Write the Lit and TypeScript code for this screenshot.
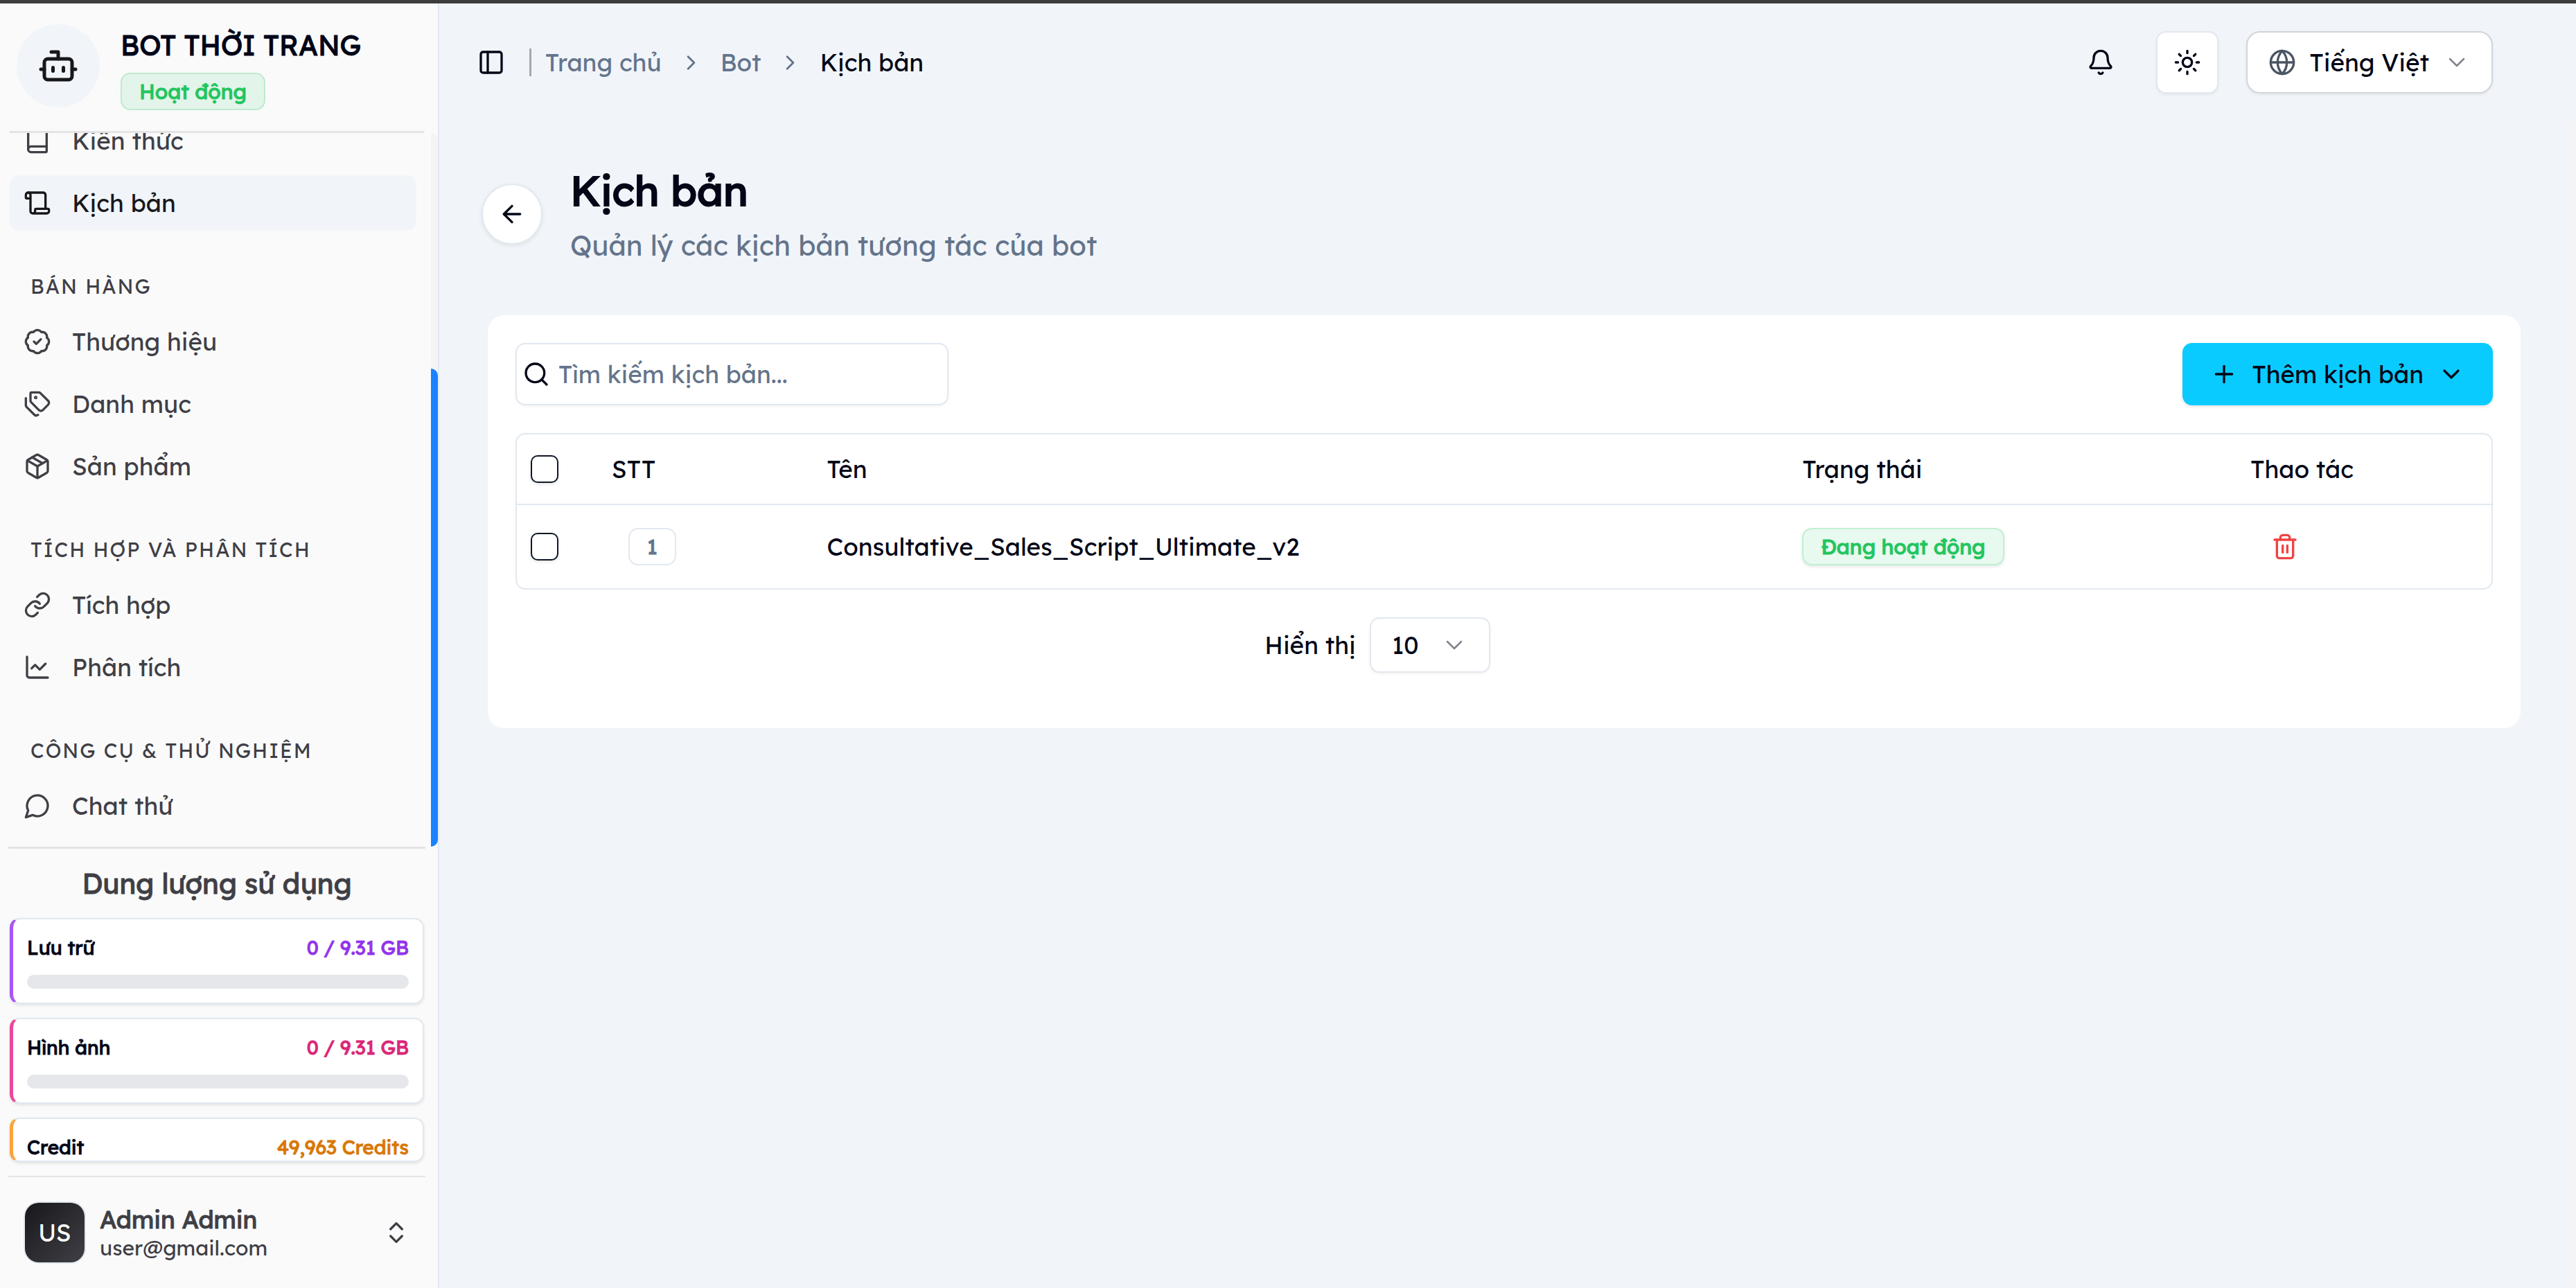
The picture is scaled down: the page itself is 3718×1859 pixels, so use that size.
import { LitElement, html, css, svg, type TemplateResult } from "lit";
import { customElement, property, state } from "lit/decorators.js";
import { classMap } from "lit/directives/class-map.js";

const ICONS: Record<string, TemplateResult> = {
  bot: svg`<path d="M12 8V4H8"/><rect width="16" height="12" x="4" y="8" rx="2"/><path d="M2 14h2"/><path d="M20 14h2"/><path d="M15 13v2"/><path d="M9 13v2"/>`,
  book: svg`<path d="M4 19.5v-15A2.500 2.500 0 0 1 6.500 2H19a1 1 0 0 1 1 1v18a1 1 0 0 1-1 1H6.500a1 1 0 0 1 0-5H20"/>`,
  scroll: svg`<path d="M19 17V5a2 2 0 0 0-2-2H4"/><path d="M8 21h12a2 2 0 0 0 2-2v-1a1 1 0 0 0-1-1H11a1 1 0 0 0-1 1v1a2 2 0 1 1-4 0V5a2 2 0 1 0-4 0v2a1 1 0 0 0 1 1h3"/>`,
  badge: svg`<path d="M3.850 8.620a4 4 0 0 1 4.780-4.770 4 4 0 0 1 6.740 0 4 4 0 0 1 4.780 4.780 4 4 0 0 1 0 6.740 4 4 0 0 1-4.770 4.780 4 4 0 0 1-6.750 0 4 4 0 0 1-4.780-4.770 4 4 0 0 1 0-6.760Z"/><path d="m9 12 2 2 4-4"/>`,
  tags: svg`<path d="M13.172 2a2 2 0 0 1 1.414.586l6.710 6.710a2.400 2.400 0 0 1 0 3.408l-4.592 4.592a2.400 2.400 0 0 1-3.408 0l-6.710-6.710A2 2 0 0 1 6 9.172V3a1 1 0 0 1 1-1z"/><path d="M2 7v6.172a2 2 0 0 0 .586 1.414l6.710 6.710a2.400 2.400 0 0 0 3.191.193"/><circle cx="10.500" cy="6.500" r=".5" fill="currentColor"/>`,
  pack: svg`<path d="M11 21.730a2 2 0 0 0 2 0l7-4A2 2 0 0 0 21 16V8a2 2 0 0 0-1-1.730l-7-4a2 2 0 0 0-2 0l-7 4A2 2 0 0 0 3 8v8a2 2 0 0 0 1 1.730z"/><path d="M12 22V12"/><path d="M3.290 7 12 12l8.710-5"/><path d="m7.500 4.270 9 5.150"/>`,
  link: svg`<path d="M10 13a5 5 0 0 0 7.540.540l3-3a5 5 0 0 0-7.070-7.070l-1.720 1.710"/><path d="M14 11a5 5 0 0 0-7.540-.540l-3 3a5 5 0 0 0 7.070 7.070l1.710-1.710"/>`,
  chart: svg`<path d="M3 3v16a2 2 0 0 0 2 2h16"/><path d="m19 9-5 5-4-4-3 3"/>`,
  chat: svg`<path d="M7.900 20A9 9 0 1 0 4 16.100L2 22Z"/>`,
  updown: svg`<path d="m7 15 5 5 5-5"/><path d="m7 9 5-5 5 5"/>`,
  panel: svg`<rect width="18" height="18" x="3" y="3" rx="2"/><path d="M9 3v18"/>`,
  right: svg`<path d="m9 18 6-6-6-6"/>`,
  down: svg`<path d="m6 9 6 6 6-6"/>`,
  back: svg`<path d="m12 19-7-7 7-7"/><path d="M19 12H5"/>`,
  bell: svg`<path d="M10.268 21a2 2 0 0 0 3.464 0"/><path d="M3.262 15.326A1 1 0 0 0 4 17h16a1 1 0 0 0 .740-1.673C19.410 13.956 18 12.499 18 8A6 6 0 0 0 6 8c0 4.499-1.411 5.956-2.738 7.326"/>`,
  sun: svg`<circle cx="12" cy="12" r="4"/><path d="M12 2v2M12 20v2M4.930 4.930l1.410 1.410M17.660 17.660l1.410 1.410M2 12h2M20 12h2M6.340 17.660l-1.410 1.410M19.070 4.930l-1.410 1.410"/>`,
  globe: svg`<circle cx="12" cy="12" r="10"/><path d="M12 2a14.500 14.500 0 0 0 0 20 14.500 14.500 0 0 0 0-20"/><path d="M2 12h20"/>`,
  search: svg`<circle cx="11" cy="11" r="8"/><path d="m21 21-4.300-4.300"/>`,
  plus: svg`<path d="M5 12h14"/><path d="M12 5v14"/>`,
  trash: svg`<path d="M3 6h18"/><path d="M19 6v14c0 1-1 2-2 2H7c-1 0-2-1-2-2V6"/><path d="M8 6V4c0-1 1-2 2-2h4c1 0 2 1 2 2v2"/><path d="M10 11v6"/><path d="M14 11v6"/>`,
};

@customElement("line-icon")
export class LineIcon extends LitElement {
  static styles = css`
    :host { display: inline-flex; flex: none; width: 40px; height: 40px; }
    .glyph {
      width: 100%; height: 100%; fill: none; stroke: currentColor;
      stroke-width: var(--icon-stroke, 2); stroke-linecap: round; stroke-linejoin: round;
    }
  `;
  @property() name = "";
  render() {
    return html`<svg class="glyph" viewBox="0 0 24 24" aria-hidden="true">${ICONS[this.name]}</svg>`;
  }
}

const base = css`
  * { box-sizing: border-box; }
  a { color: inherit; text-decoration: none; }
  button, input, select { font: inherit; color: inherit; }
  button { cursor: pointer; padding: 0; }
  h1, h2, p, ul, ol { margin: 0; padding: 0; font-weight: inherit; }
  ul, ol { list-style: none; }
  .strong { -webkit-text-stroke: 1px currentColor; }
`;

interface NavItem { icon: string; label: string; active?: boolean; }
interface NavGroup { title?: string; items: NavItem[]; }

const NAV: NavGroup[] = [
  { items: [{ icon: "book", label: "Kiến thức" }, { icon: "scroll", label: "Kịch bản", active: true }] },
  {
    title: "BÁN HÀNG",
    items: [
      { icon: "badge", label: "Thương hiệu" },
      { icon: "tags", label: "Danh mục" },
      { icon: "pack", label: "Sản phẩm" },
    ],
  },
  {
    title: "TÍCH HỢP VÀ PHÂN TÍCH",
    items: [{ icon: "link", label: "Tích hợp" }, { icon: "chart", label: "Phân tích" }],
  },
  { title: "CÔNG CỤ & THỬ NGHIỆM", items: [{ icon: "chat", label: "Chat thử" }] },
];

const USAGE = [
  { label: "Lưu trữ", value: "0 / 9.31 GB", tone: "violet" },
  { label: "Hình ảnh", value: "0 / 9.31 GB", tone: "pink" },
  { label: "Credit", value: "49,963 Credits", tone: "amber" },
];

@customElement("bot-sidebar")
export class BotSidebar extends LitElement {
  static styles = [base, css`
    :host {
      display: flex; flex-direction: column; flex: none; width: 634px; min-height: 0;
      background: #fafafa; border-right: 2px solid #e2e8f0; color: #3f3f46;
    }
    .brand {
      display: flex; align-items: flex-start; gap: 30px; flex: none;
      height: 187px; margin: 0 20px 0 14px; padding: 30px 10px 0;
      border-bottom: 3px solid #e4e4e7;
    }
    .bot {
      display: grid; place-items: center; flex: none; width: 120px; height: 120px;
      border-radius: 50%; background: #f1f5f9; color: #18181b;
    }
    .bot line-icon { width: 60px; height: 60px; }
    .name { font-size: 40px; line-height: 60px; color: #020617; }
    .info { display: flex; flex-direction: column; align-items: flex-start; gap: 10px; }
    .status {
      display: flex; align-items: center; height: 54px; padding: 0 25px;
      border: 2px solid rgba(34, 197, 94, 0.2); border-radius: 14px;
      background: rgba(34, 197, 94, 0.1); color: #22c55e; font-size: 30px;
    }
    .scroll { display: flex; flex: 1; min-height: 0; }
    .nav {
      display: flex; flex-direction: column; justify-content: flex-end; gap: 50px;
      flex: 1; min-height: 0; overflow: hidden; padding: 0 21px 19px 14px;
    }
    .group { display: flex; flex-direction: column; gap: 10px; }
    .caption {
      height: 60px; line-height: 60px; padding-left: 30px;
      font-size: 29px; letter-spacing: 2px;
    }
    .list { display: flex; flex-direction: column; gap: 10px; }
    .item {
      display: flex; align-items: center; gap: 30px; height: 80px; padding: 0 20px;
      border-radius: 14px; font-size: 35px;
    }
    .item.active { background: #f1f5f9; color: #18181b; }
    .rail {
      display: flex; align-items: flex-end; flex: none; width: 10px;
      background: #f4f4f5; border-radius: 0 10px 10px 0;
    }
    .thumb { width: 100%; height: 67%; background: #1a82ff; border-radius: 0 10px 10px 0; }
    .usage {
      display: flex; flex-direction: column; gap: 20px; flex: none; height: 477px; overflow: hidden;
      margin: 0 18px 0 12px; border-top: 3px solid #e4e4e7; border-bottom: 2px solid #e4e4e7;
      padding: 20px 2px;
    }
    .usage-title { font-size: 40px; line-height: 60px; text-align: center; }
    .meter {
      display: flex; flex-direction: column; gap: 20px; flex: none; height: 124px;
      overflow: hidden; padding: 22px 20px 0;
      border: 2px solid #e2e8f0; border-left: 5px solid; border-radius: 14px;
      background: #fff; box-shadow: 0 2px 4px rgba(0, 0, 0, 0.1);
    }
    .meter:last-child { height: auto; flex: 0 1 64px; }
    .meter.violet { border-left-color: #a855f7; }
    .meter.pink { border-left-color: #ec4899; }
    .meter.amber { border-left-color: #fba43c; }
    .figures {
      display: flex; justify-content: space-between; flex: none;
      font-size: 28px; line-height: 38px; color: #020617;
    }
    .violet .amount { color: #9333ea; }
    .pink .amount { color: #db2777; }
    .amber .amount { color: #d97706; }
    .bar { flex: none; height: 20px; border-radius: 10px; background: #e5e7eb; }
    .user {
      display: flex; align-items: center; gap: 22px; flex: none; height: 160px; width: 100%;
      border: 0; background: none; padding: 0 40px 0 36px; text-align: left;
    }
    .avatar {
      display: grid; place-items: center; flex: none; width: 86px; height: 86px;
      border-radius: 20px; background: linear-gradient(135deg, #18181b, #3f3f46);
      box-shadow: 0 0 0 2px #e2e8f0; color: #fff; font-size: 35px;
    }
    .who { display: flex; flex-direction: column; flex: 1; }
    .full { font-size: 35px; line-height: 44px; }
    .mail { font-size: 30px; line-height: 38px; }
  `];

  render() {
    return html`
      <header class="brand">
        <span class="bot"><line-icon name="bot"></line-icon></span>
        <div class="info">
          <p class="name strong">BOT THỜI TRANG</p>
          <span class="status strong">Hoạt động</span>
        </div>
      </header>
      <div class="scroll">
        <nav class="nav">
          ${NAV.map((group) => html`
            <div class="group">
              ${group.title ? html`<h2 class="caption">${group.title}</h2>` : null}
              <ul class="list">
                ${group.items.map((item) => html`
                  <li>
                    <a href="#" class=${classMap({ item: true, active: !!item.active })}>
                      <line-icon name=${item.icon}></line-icon><span>${item.label}</span>
                    </a>
                  </li>`)}
              </ul>
            </div>`)}
        </nav>
        <div class="rail"><div class="thumb"></div></div>
      </div>
      <section class="usage">
        <h2 class="usage-title strong">Dung lượng sử dụng</h2>
        ${USAGE.map((row) => html`
          <div class="meter ${row.tone}">
            <div class="figures strong"><span>${row.label}</span><span class="amount strong">${row.value}</span></div>
            <div class="bar"></div>
          </div>`)}
      </section>
      <button class="user" type="button">
        <span class="avatar">US</span>
        <span class="who">
          <span class="full strong">Admin Admin</span>
          <span class="mail">user@gmail.com</span>
        </span>
        <line-icon name="updown"></line-icon>
      </button>
    `;
  }
}

@customElement("top-bar")
export class TopBar extends LitElement {
  static styles = [base, css`
    :host {
      display: flex; align-items: center; justify-content: space-between; flex: none;
      height: 170px; padding: 0 120px 0 55px; font-size: 35px;
    }
    .side { display: flex; align-items: center; }
    .plain { display: grid; place-items: center; border: 0; background: none; }
    .rule { width: 3px; height: 40px; margin: 0 20px 0 35px; background: #a1a9b5; }
    .crumbs { display: flex; align-items: center; gap: 25px; color: #64748b; }
    .crumbs li { display: flex; align-items: center; gap: 25px; }
    .crumbs line-icon { width: 35px; height: 35px; }
    .crumbs .here { color: #020617; }
    .tools { display: flex; align-items: center; gap: 40px; }
    .bell { width: 80px; height: 80px; }
    .theme {
      display: grid; place-items: center; width: 90px; height: 90px;
      border: 2px solid #e2e8f0; border-radius: 14px; background: #fff;
      box-shadow: 0 2px 4px rgba(0, 0, 0, 0.06);
    }
    .lang {
      display: flex; align-items: center; height: 90px; padding: 0 30px;
      border: 2px solid #d1d5db; border-radius: 20px; background: #fff;
      box-shadow: 0 2px 4px rgba(0, 0, 0, 0.06);
    }
    .lang .globe { color: #4b5563; margin-right: 20px; }
    .lang .down { color: #80838b; margin-left: 20px; --icon-stroke: 1.5; }
  `];

  render() {
    return html`
      <div class="side">
        <button class="plain" type="button" aria-label="Sidebar"><line-icon name="panel"></line-icon></button>
        <span class="rule"></span>
        <nav>
          <ol class="crumbs">
            <li><a href="#">Trang chủ</a><line-icon name="right"></line-icon></li>
            <li><a href="#">Bot</a><line-icon name="right"></line-icon></li>
            <li class="here">Kịch bản</li>
          </ol>
        </nav>
      </div>
      <div class="tools">
        <button class="plain bell" type="button" aria-label="Thông báo"><line-icon name="bell"></line-icon></button>
        <button class="theme" type="button" aria-label="Giao diện"><line-icon name="sun"></line-icon></button>
        <button class="lang" type="button">
          <line-icon class="globe" name="globe"></line-icon>Tiếng Việt<line-icon class="down" name="down"></line-icon>
        </button>
      </div>
    `;
  }
}

@customElement("script-panel")
export class ScriptPanel extends LitElement {
  static styles = [base, css`
    :host {
      display: flex; flex-direction: column; gap: 40px; min-height: 596px;
      padding: 40px; border-radius: 24px; background: #fff; font-size: 35px;
    }
    .tools { display: flex; align-items: center; justify-content: space-between; }
    .search {
      display: flex; align-items: center; gap: 12px; width: 625px; height: 90px; padding: 0 8px;
      border: 2px solid #e2e8f0; border-radius: 14px; box-shadow: 0 2px 4px rgba(0, 0, 0, 0.05);
    }
    .query { flex: 1; min-width: 0; border: 0; outline: 0; padding: 0; background: none; }
    .query::placeholder { color: #64748b; opacity: 1; }
    .add {
      display: flex; align-items: center; gap: 20px; height: 90px; padding: 0 40px;
      border: 0; border-radius: 14px; background: #0acbff;
      box-shadow: 0 2px 4px rgba(0, 0, 0, 0.12);
    }
    .frame { border: 2px solid #e2e8f0; border-radius: 14px; overflow: hidden; }
    .grid { width: 100%; table-layout: fixed; border-collapse: collapse; }
    .grid th, .grid td { padding: 0 20px; text-align: left; font-weight: 400; vertical-align: middle; }
    .grid th { height: 101px; }
    .grid td { height: 121px; border-top: 2px solid #e2e8f0; }
    .pick { width: 4.1%; }
    .no { width: 10.9%; }
    .label { width: 49.4%; }
    .state { width: 22.7%; }
    .tick {
      display: block; appearance: none; width: 40px; height: 40px; margin: 0;
      border: 2px solid #0f172a; border-radius: 10px; background: #fff;
      box-shadow: 0 2px 4px rgba(0, 0, 0, 0.1);
    }
    .num, .live {
      display: inline-flex; align-items: center; height: 54px; padding: 0 25px;
      border: 2px solid #e2e8f0; border-radius: 14px; vertical-align: middle;
      font-size: 30px; color: #64748b;
    }
    .num { margin-left: 24px; }
    .live {
      border-color: rgba(34, 197, 94, 0.2); background: rgba(34, 197, 94, 0.1); color: #22c55e;
      box-shadow: 0 2px 4px rgba(0, 0, 0, 0.1);
    }
    .remove {
      display: grid; place-items: center; width: 100px; height: 80px;
      border: 0; background: none; color: #ef4444;
    }
    .pager { display: flex; align-items: center; justify-content: center; gap: 20px; padding-right: 366px; }
    .size { display: grid; align-items: center; width: 174px; height: 80px; }
    .size select, .size line-icon { grid-area: 1 / 1; }
    .size select {
      appearance: none; width: 100%; height: 100%; padding: 0 30px;
      border: 2px solid #e2e8f0; border-radius: 14px; background: #fff;
      box-shadow: 0 2px 4px rgba(0, 0, 0, 0.05);
    }
    .size line-icon { justify-self: end; margin-right: 32px; color: #80838b; pointer-events: none; --icon-stroke: 1.5; }
  `];

  @state() private rows = [{ id: 1, name: "Consultative_Sales_Script_Ultimate_v2", status: "Đang hoạt động" }];

  render() {
    return html`
      <div class="tools">
        <label class="search">
          <line-icon name="search"></line-icon>
          <input class="query" type="text" aria-label="Tìm kiếm kịch bản" placeholder="Tìm kiếm kịch bản..." />
        </label>
        <button class="add" type="button">
          <line-icon name="plus"></line-icon>Thêm kịch bản<line-icon name="down"></line-icon>
        </button>
      </div>
      <div class="frame">
        <table class="grid">
          <thead>
            <tr>
              <th class="pick"><input class="tick" type="checkbox" aria-label="Chọn tất cả" /></th>
              <th class="no">STT</th>
              <th class="label">Tên</th>
              <th class="state">Trạng thái</th>
              <th>Thao tác</th>
            </tr>
          </thead>
          <tbody>
            ${this.rows.map((row) => html`
              <tr>
                <td><input class="tick" type="checkbox" aria-label=${row.name} /></td>
                <td><span class="num strong">${row.id}</span></td>
                <td>${row.name}</td>
                <td><span class="live strong">${row.status}</span></td>
                <td><button class="remove" type="button" aria-label="Xóa"><line-icon name="trash"></line-icon></button></td>
              </tr>`)}
          </tbody>
        </table>
      </div>
      <div class="pager">
        <label for="size">Hiển thị</label>
        <span class="size">
          <select id="size"><option>10</option><option>20</option><option>50</option></select>
          <line-icon name="down"></line-icon>
        </span>
      </div>
    `;
  }
}

@customElement("app-root")
export class AppRoot extends LitElement {
  static styles = [base, css`
    :host {
      display: flex; flex-direction: column; height: 100vh; overflow: hidden;
      border-top: 5px solid #3d3d3d; box-sizing: border-box; background: #f1f5f9; color: #020617;
      font-family: Lexend, Inter, "Noto Sans", sans-serif;
    }
    .shell { display: flex; flex: 1; min-height: 0; }
    .main { display: flex; flex-direction: column; flex: 1; min-width: 0; }
    .view { display: flex; flex: 1; min-height: 0; }
    .body { flex: 1; min-width: 0; padding: 60px 70px 0; }
    .rail { flex: none; width: 10px; background: #f4f4f5; border-radius: 0 10px 10px 0; }
    .heading { display: flex; align-items: center; gap: 40px; margin: 0 0 72px -9px; }
    .words { display: flex; flex-direction: column; gap: 10px; }
    .back {
      display: grid; place-items: center; flex: none; width: 88px; height: 88px;
      border: 2px solid #e2e8f0; border-radius: 50%; background: #fff;
      box-shadow: 0 2px 6px rgba(0, 0, 0, 0.08);
    }
    .title { font-size: 60px; line-height: 80px; -webkit-text-stroke: 2px currentColor; }
    .sub { font-size: 40px; line-height: 58px; color: #64748b; }
  `];

  render() {
    return html`
      <div class="shell">
        <bot-sidebar></bot-sidebar>
        <main class="main">
          <top-bar></top-bar>
          <div class="view">
            <div class="body">
              <div class="heading">
                <button class="back" type="button" aria-label="Quay lại"><line-icon name="back"></line-icon></button>
                <div class="words">
                  <h1 class="title">Kịch bản</h1>
                  <p class="sub">Quản lý các kịch bản tương tác của bot</p>
                </div>
              </div>
              <script-panel></script-panel>
            </div>
            <div class="rail"></div>
          </div>
        </main>
      </div>
    `;
  }
}
